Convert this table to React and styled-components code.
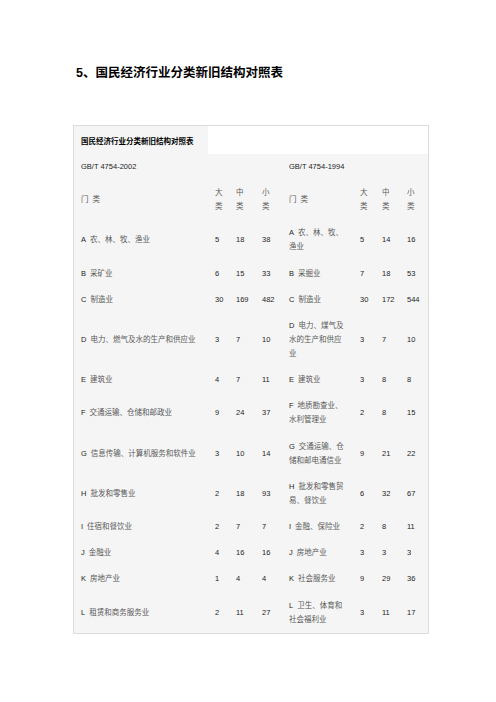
import React from "react";
import styled, { createGlobalStyle } from "styled-components";

const GlobalStyle = createGlobalStyle`
  body {
    margin: 0;
    background: #fff;
    font-family: "Liberation Sans", "Noto Sans CJK SC", sans-serif;
  }
`;

const oldRows = [
  ["A", "农、林、牧、渔业", 5, 18, 38],
  ["B", "采矿业", 6, 15, 33],
  ["C", "制造业", 30, 169, 482],
  ["D", "电力、燃气及水的生产和供应业", 3, 7, 10],
  ["E", "建筑业", 4, 7, 11],
  ["F", "交通运输、仓储和邮政业", 9, 24, 37],
  ["G", "信息传输、计算机服务和软件业", 3, 10, 14],
  ["H", "批发和零售业", 2, 18, 93],
  ["I", "住宿和餐饮业", 2, 7, 7],
  ["J", "金融业", 4, 16, 16],
  ["K", "房地产业", 1, 4, 4],
  ["L", "租赁和商务服务业", 2, 11, 27],
];

// 1994 names are broken the same way as in the source table
const newRows = [
  ["A", ["农、林、牧、", "渔业"], 5, 14, 16],
  ["B", ["采掘业"], 7, 18, 53],
  ["C", ["制造业"], 30, 172, 544],
  ["D", ["电力、煤气及", "水的生产和供应", "业"], 3, 7, 10],
  ["E", ["建筑业"], 3, 8, 8],
  ["F", ["地质勘查业、", "水利管理业"], 2, 8, 15],
  ["G", ["交通运输、仓", "储和邮电通信业"], 9, 21, 22],
  ["H", ["批发和零售贸", "易、餐饮业"], 6, 32, 67],
  ["I", ["金融、保险业"], 2, 8, 11],
  ["J", ["房地产业"], 3, 3, 3],
  ["K", ["社会服务业"], 9, 29, 36],
  ["L", ["卫生、体育和", "社会福利业"], 3, 11, 17],
];

const colWidths = [134, 21, 26, 27, 71, 22, 25, 28];

const App = () => {
  return (
    <Page>
      <GlobalStyle />
      <Heading>5、国民经济行业分类新旧结构对照表</Heading>
      <Panel>
        <Table>
          <colgroup>
            {colWidths.map((w, i) => (
              <col key={i} style={{ width: w }} />
            ))}
          </colgroup>
          <tbody>
            <TitleRow>
              <TitleCell>国民经济行业分类新旧结构对照表</TitleCell>
              <BlankCell colSpan={7} />
            </TitleRow>
            <tr>
              <Cell colSpan={4}>GB/T 4754-2002</Cell>
              <Cell colSpan={4}>GB/T 4754-1994</Cell>
            </tr>
            <tr>
              <Cell><Zh>门</Zh><Zh $gap>类</Zh></Cell>
              <Cell><Zh>大<br />类</Zh></Cell>
              <Cell><Zh>中<br />类</Zh></Cell>
              <Cell><Zh>小<br />类</Zh></Cell>
              <Cell><Zh>门</Zh><Zh $gap>类</Zh></Cell>
              <Cell><Zh>大<br />类</Zh></Cell>
              <Cell><Zh>中<br />类</Zh></Cell>
              <Cell><Zh>小<br />类</Zh></Cell>
            </tr>
            {oldRows.map((row, i) => {
              const right = newRows[i];
              return (
                <tr key={row[0]}>
                  <Cell>
                    {row[0]}<Zh $gap>{row[1]}</Zh>
                  </Cell>
                  <Cell>{row[2]}</Cell>
                  <Cell>{row[3]}</Cell>
                  <Cell>{row[4]}</Cell>
                  <Cell>
                    {right[0]}
                    {right[1].map((line, j) => (
                      <React.Fragment key={j}>
                        {j > 0 && <br />}
                        <Zh $gap={j === 0}>{line}</Zh>
                      </React.Fragment>
                    ))}
                  </Cell>
                  <Cell>{right[2]}</Cell>
                  <Cell>{right[3]}</Cell>
                  <Cell>{right[4]}</Cell>
                </tr>
              );
            })}
          </tbody>
        </Table>
      </Panel>
    </Page>
  );
};

const Page = styled.div`
  padding: 63px 0 40px 73px;
`;

const Heading = styled.h1`
  margin: 0 0 0 3px;
  font-size: 12.5px;
  line-height: 20px;
  font-weight: bold;
  color: #000;
  font-family: "Liberation Sans", "Noto Sans CJK SC", sans-serif;
`;

const Panel = styled.div`
  margin-top: 42px;
  width: 356px;
  box-sizing: border-box;
  border: 1px solid #dcdcdc;
  background: #f5f5f5;
`;

const Table = styled.table`
  width: 100%;
  border-collapse: collapse;
  table-layout: fixed;
`;

const TitleRow = styled.tr`
  height: 28px;
`;

const TitleCell = styled.td`
  padding: 0 0 0 7px;
  font-size: 7.5px;
  font-weight: bold;
  color: #000;
  white-space: nowrap;
  vertical-align: middle;
`;

const BlankCell = styled.td`
  background: #fff;
  padding: 0;
`;

const Cell = styled.td`
  padding: 6.1px 0 6.1px 7px;
  font-size: 7.5px;
  line-height: 14px;
  color: #1e1e1e;
  white-space: nowrap;
  vertical-align: middle;
`;

const Zh = styled.span`
  color: #5a5a5a;
  margin-left: ${(p) => (p.$gap ? "4px" : "0")};
`;

export default App;
